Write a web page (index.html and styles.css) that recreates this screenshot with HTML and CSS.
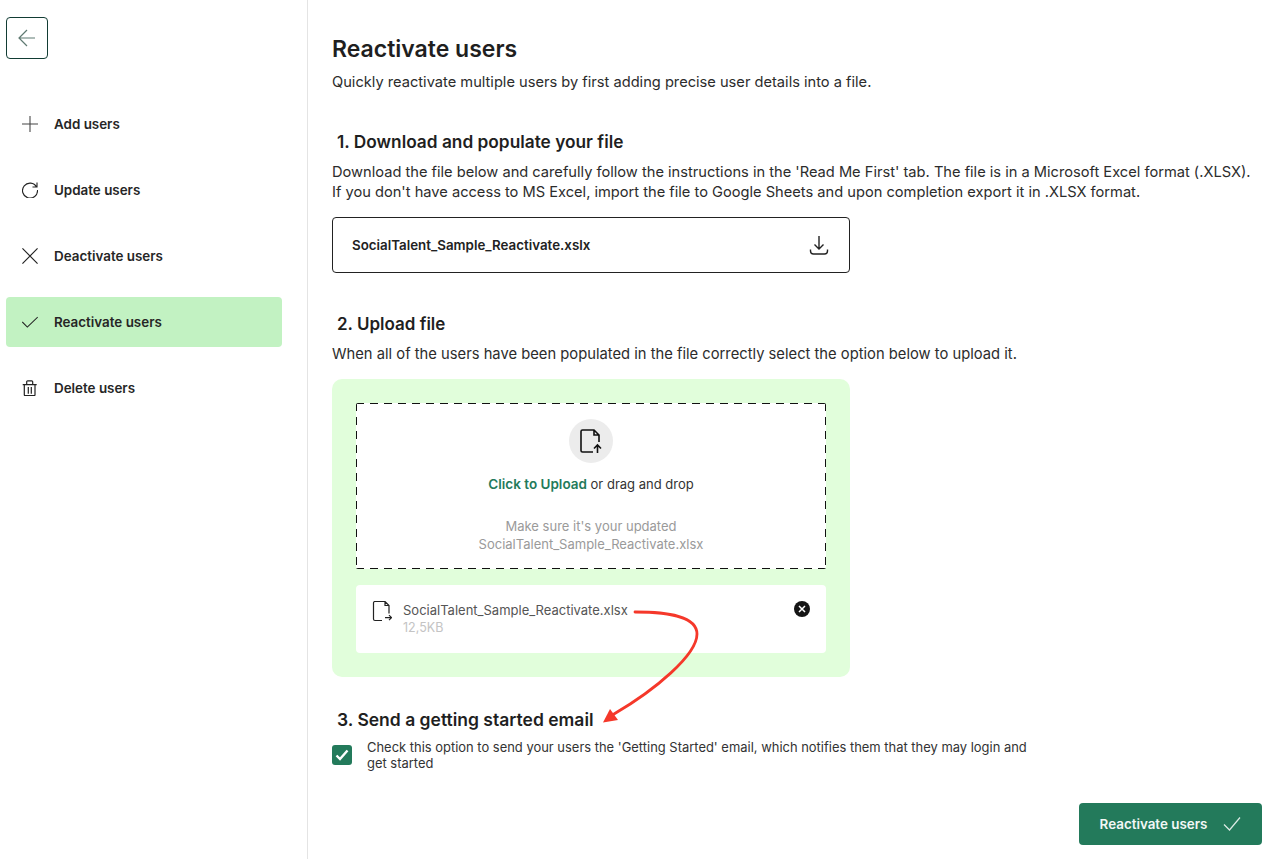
FILE: index.html
```html
<!DOCTYPE html>
<html lang="en">
<head>
<meta charset="utf-8">
<title>Reactivate users</title>
<link rel="stylesheet" href="styles.css">
</head>
<body>
<div class="app">
  <aside class="sidebar">
    <button class="back" aria-label="Back">
      <svg width="20" height="20" viewBox="0 0 20 20" fill="none" stroke="#5f7a72" stroke-width="1.2"><path d="M18 10H2M10 2l-8 8 8 8"/></svg>
    </button>
    <nav class="nav">
      <a class="nav-item"><svg class="nav-icon" viewBox="0 0 18 18" fill="none" stroke="#444" stroke-width="1.2"><path d="M0 9h18M9 0v18"/></svg><span>Add users</span></a>
      <a class="nav-item"><svg class="nav-icon" viewBox="0 0 16 16" fill="none" stroke="#222" stroke-width="1.1"><path d="M14.600 5A7.500 7.500 0 1 0 15.500 8M15 .5V5h-4.500"/></svg><span>Update users</span></a>
      <a class="nav-item"><svg class="nav-icon" viewBox="0 0 18 18" fill="none" stroke="#222" stroke-width="1.300"><path d="M.5.5l17 17M17.500.5l-17 17"/></svg><span>Deactivate users</span></a>
      <a class="nav-item active"><svg class="nav-icon" viewBox="0 0 18 18" fill="none" stroke="#222" stroke-width="1.200"><path d="M.3 9l5.700 5.700L17.700 3.500"/></svg><span>Reactivate users</span></a>
      <a class="nav-item"><svg class="nav-icon" viewBox="0 -1 16 16" fill="none" stroke="#222" stroke-width="1.200"><path d="M.7 3.700h14M4.700 3.700V.8q0-1 1-1h4q1 0 1 1v2.900M2.300 3.700v10a1 1 0 0 0 1 1h8.700a1 1 0 0 0 1-1v-10M6.300 6v6.700M9.300 6v6.700"/></svg><span>Delete users</span></a>
    </nav>
  </aside>
  <main class="main">
    <h1 class="title">Reactivate users</h1>
    <p class="text">Quickly reactivate multiple users by first adding precise user details into a file.</p>

    <h2 class="step step-one">1. Download and populate your file</h2>
    <p class="text">Download the file below and carefully follow the instructions in the 'Read Me First' tab. The file is in a Microsoft Excel format (.XLSX).<br>If you don't have access to MS Excel, import the file to Google Sheets and upon completion export it in .XLSX format.</p>
    <div class="download">
      <span class="download-name">SocialTalent_Sample_Reactivate.xslx</span>
      <svg width="20" height="20" viewBox="0 0 20 20" fill="none" stroke="#222" stroke-width="1.400"><path d="M10 1v12.500M5.500 9.500l4.500 4.500 4.500-4.500M1.500 14.500v1.500a3 3 0 0 0 3 3h11a3 3 0 0 0 3-3v-1.500"/></svg>
    </div>

    <h2 class="step step-two">2. Upload file</h2>
    <p class="text">When all of the users have been populated in the file correctly select the option below to upload it.</p>
    <section class="upload">
      <div class="dropzone">
        <span class="drop-icon">
          <svg width="22" height="24" viewBox="0 0 22 24" fill="none" stroke="#111" stroke-width="1.600"><path d="M13 23H2.500A1.500 1.500 0 0 1 1 21.500V2.500A1.500 1.500 0 0 1 2.500 1H14l5 5v7M14 1v5h5M17.500 24v-8M14 19.500l3.500-3.500 3.500 3.500"/></svg>
        </span>
        <p class="drop-line"><strong class="drop-link">Click to Upload</strong> or drag and drop</p>
        <p class="drop-hint">Make sure it's your updated<br>SocialTalent_Sample_Reactivate.xlsx</p>
      </div>
      <div class="file-row">
        <svg class="file-icon" width="20" height="21" viewBox="0 0 20 21" fill="none" stroke="#222" stroke-width="1.200"><path d="M10 19.500H3a1.500 1.500 0 0 1-1.500-1.500V2A1.500 1.500 0 0 1 3 .5h10l4 4v8M13 .5v4h4M13 16.700h6.500M17 14.200l2.500 2.500-2.500 2.500"/></svg>
        <div class="file-info">
          <div class="file-name">SocialTalent_Sample_Reactivate.xlsx</div>
          <div class="file-size">12,5KB</div>
        </div>
        <svg class="file-remove" width="16" height="16" viewBox="0 0 16 16"><circle cx="8" cy="8" r="8" fill="#151515"/><path d="M5 5l6 6M11 5l-6 6" stroke="#fff" stroke-width="1.500"/></svg>
      </div>
    </section>

    <h2 class="step step-three">3. Send a getting started email</h2>
    <div class="check-row">
      <span class="checkbox">
        <svg width="14" height="12" viewBox="0 0 14 12" fill="none" stroke="#fff" stroke-width="2.400"><path d="M1.500 6.500l3.500 3.500 7.500-8.500"/></svg>
      </span>
      <p class="check-text">Check this option to send your users the 'Getting Started' email, which notifies them that they may login and get started</p>
    </div>
    <div class="actions">
      <button class="primary">Reactivate users
        <svg width="18" height="16" viewBox="0 0 18 16" fill="none" stroke="#dcebe5" stroke-width="1.200"><path d="M1 8.500l5.500 5.500L17 1.500"/></svg>
      </button>
    </div>
  </main>
</div>
<svg class="annotation" width="1285" height="859" viewBox="0 0 1285 859" fill="none" aria-hidden="true">
  <path d="M635 612C668 612 697 616 697 634C697 655 655 690 614 714" stroke="#f5382a" stroke-width="2.800" stroke-linecap="round"/>
  <path d="M603 722.500L610 709L618 720Z" fill="#f5382a"/>
</svg>
</body>
</html>
```
FILE: styles.css
```css
* { box-sizing: border-box; }
html, body { margin: 0; height: 100%; background: #fff; }
body { font-family: Inter, "Liberation Sans", sans-serif; color: #222; overflow: hidden; }
.app { display: flex; height: 859px; }
.sidebar { width: 308px; flex: none; border-right: 1px solid #e4e4e4; padding: 17px 25px 0 6px; }
.back { width: 42px; height: 42px; padding: 0; display: flex; align-items: center; justify-content: center; background: #fff; border: 1px solid #123c34; border-radius: 4px; }
.nav { margin-top: 40px; display: flex; flex-direction: column; gap: 16px; }
.nav-item { height: 50px; display: flex; align-items: center; gap: 16px; padding-left: 16px; font-size: 13.400px; font-weight: 600; border-radius: 4px; color: #262626; }
.nav-item.active { background: #c2f2c2; }
.nav-icon { width: 16px; height: 16px; flex: none; }
.main { flex: 1; min-width: 0; padding: 36px 23px 0 24px; position: relative; }
.title { margin: 0; font-size: 23px; line-height: 26px; font-weight: 600; color: #1f1f1f; }
.text { margin: 9px 0 0; font-size: 14.650px; line-height: 20px; color: #2c2c2c; }
.title + .text { margin-top: 10px; }
.step { margin: 0 0 0 5px; font-size: 17.300px; line-height: 22px; font-weight: 600; color: #1f1f1f; }
.step-one { margin-top: 39px; }
.step-two { margin-top: 40px; font-size: 17px; }
.step-two + .text { font-size: 14.750px; }
.step-three { margin-top: 32px; font-size: 17.500px; }
.download { width: 518px; height: 56px; margin-top: 15px; padding: 0 20px 0 19px; display: flex; align-items: center; justify-content: space-between; border: 1px solid #222; border-radius: 4px; }
.download-name { font-size: 13.350px; font-weight: 600; color: #222; }
.upload { width: 518px; height: 298px; margin-top: 15px; padding: 24px; background: #e1fedb; border-radius: 10px; }
.dropzone {
  height: 166px;
  border-radius: 2px;
  display: flex;
  flex-direction: column;
  align-items: center;
  padding-top: 16px;
  text-align: center;
  background-color: #fff;
  background-image:
    linear-gradient(90deg, #111 8px, transparent 8px),
    linear-gradient(90deg, #111 8px, transparent 8px),
    linear-gradient(180deg, #111 8px, transparent 8px),
    linear-gradient(180deg, #111 8px, transparent 8px);
  background-size: 14px 1px, 14px 1px, 1px 14px, 1px 14px;
  background-position: 0 0, 0 100%, 0 0, 100% 0;
  background-repeat: repeat-x, repeat-x, repeat-y, repeat-y;
}
.drop-icon { width: 44px; height: 44px; border-radius: 50%; background: #ececec; display: flex; align-items: center; justify-content: center; }
.drop-line { margin: 12px 0 0; font-size: 13px; line-height: 18px; color: #333; }
.drop-link { color: #237a5b; font-weight: 600; font-size: 13.500px; }
.drop-hint { margin: 24px 0 0; font-size: 13px; line-height: 18px; color: #9a9a9a; }
.file-row { height: 68px; margin-top: 16px; padding: 16px; background: #fff; border-radius: 4px; display: flex; align-items: flex-start; gap: 11px; }
.file-info { flex: 1; font-size: 13px; line-height: 18px; }
.file-icon { flex: none; }
.file-name { color: #555; }
.file-size { color: #c4c4c4; font-size: 12.500px; }
.file-remove { flex: none; }
.check-row { display: flex; align-items: flex-start; gap: 15px; margin-top: 8px; width: 700px; }
.checkbox { width: 20px; height: 20px; margin-top: 6px; flex: none; border-radius: 3px; background: #237a5b; display: flex; align-items: center; justify-content: center; }
.check-text { margin: 0; font-size: 12.950px; line-height: 16px; color: #333; }
.actions { display: flex; justify-content: flex-end; margin-top: 32px; }
.primary { width: 183px; height: 42px; border: 0; border-radius: 4px; background: #237a5b; color: #f2f7f5; font: 600 13.400px Inter, "Liberation Sans", sans-serif; display: flex; align-items: center; justify-content: center; gap: 16px; }
.annotation { position: absolute; left: 0; top: 0; pointer-events: none; }
```
